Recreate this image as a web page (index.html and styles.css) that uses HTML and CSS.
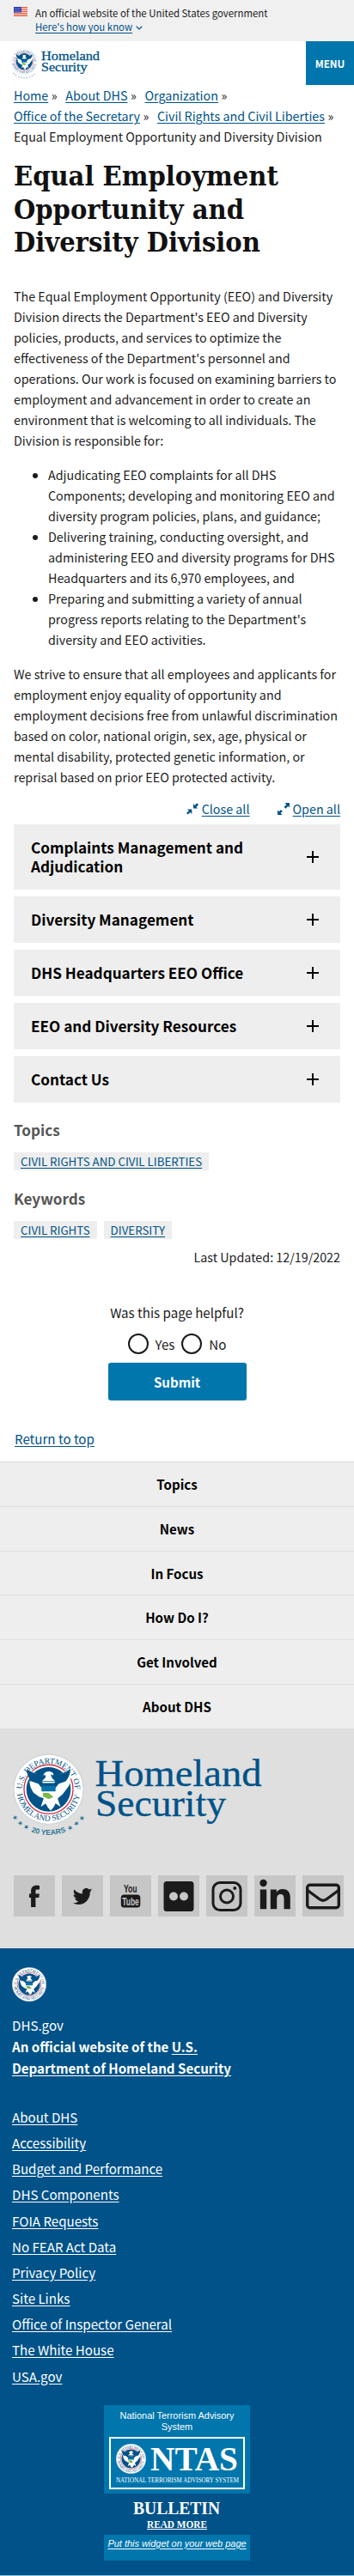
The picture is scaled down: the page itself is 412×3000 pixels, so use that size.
FILE: index.html
```html
<!DOCTYPE html>
<html lang="en">
<head>
<meta charset="utf-8">
<title>Equal Employment Opportunity and Diversity Division | Homeland Security</title>
<link rel="stylesheet" href="styles.css">
</head>
<body>
<svg class="defs" width="0" height="0" aria-hidden="true">
  <defs>
    <path id="ring-top" d="M12.500 51a37.500 37.500 0 0 1 75 0"/>
    <path id="ring-bottom" d="M4.900 54a45.300 45.300 0 0 0 90.200 0"/>
    <path id="ring-years" d="M-2 89a65 65 0 0 0 104 0"/>
    <symbol id="eagle" viewBox="0 0 100 100">
      <circle cx="50" cy="50" r="34.800" fill="#fff" stroke="#c8324a" stroke-width="1.600"/>
      <circle cx="50" cy="50" r="31.500" fill="#005288"/>
      <path fill="#fff" d="M17 19l17 10 2 4h28l2-4 17-10-1 14-3 12-9 12-7 6 4 12-7-5-3 6-4 4-4-4-3-6-7 5 4-12-7-6-9-12-3-12z"/>
      <path fill="#005288" d="M19 21c5 4 11 6 16 8l4 8 3 4h16l3-4 4-8c5-2 11-4 16-8 0 8-3 13-7 18l-9 3-6 7-4 2H45l-4-2-6-7-9-3c-4-5-7-10-7-18z"/>
      <path fill="#005288" d="M34 28c4-7 10-9 16-9s12 2 16 9l-4 11H38z"/>
      <path fill="#fff" d="M43 29c1-4 8-6 12-3 2 1 2 3 2 4l-4-1 2 5 4 4H41l5-5-1-4-2 2z"/>
      <path fill="#fff" d="M23 38l13 5 6 8v11l-5-1-8-6c-3-4-6-10-6-17zM77 38l-13 5-6 8v11l5-1 8-6c3-4 6-10 6-17z"/>
      <path fill="#0873a8" d="M40 45h20v8H40z"/>
      <path fill="#79b84a" d="M42 55h8l7 6-7 3-8-4z"/>
      <path fill="#fff" d="M44 64h12l-2 7-4 3-4-3z"/>
    </symbol>
    <symbol id="seal" viewBox="0 0 100 100">
      <circle cx="50" cy="50" r="49.500" fill="#fff" stroke="#b9c6ce" stroke-width="1"/>
      <text class="seal-text"><textPath href="#ring-top" startOffset="1" textLength="116">U.S. DEPARTMENT OF</textPath></text>
      <text class="seal-text"><textPath href="#ring-bottom" startOffset="3" textLength="126">HOMELAND SECURITY</textPath></text>
      <use href="#eagle" width="100" height="100"/>
    </symbol>
  </defs>
</svg>

<div class="banner">
  <svg class="flag" viewBox="0 0 16 11"><path fill="#fff" d="M0 0h16v11H0z"/><path stroke="#db3e1f" stroke-width=".9" d="M0 .5h16M0 2.200h16M0 3.900h16M0 5.600h16M0 7.300h16M0 9h16M0 10.600h16"/><path fill="#1e33b1" d="M0 0h9v6.500H0z"/><path stroke="#fff" stroke-width=".6" stroke-dasharray=".7 1" d="M.8 1.300h8M1.500 2.700h7M.8 4.100h8M1.500 5.400h7"/></svg>
  <div class="banner-text">
    <div>An official website of the United States government</div>
    <div><a href="#">Here's how you know</a><svg class="chev" viewBox="0 0 8 5"><path fill="none" stroke="#005288" stroke-width="1.200" d="M.8.8L4 3.900 7.200.8"/></svg></div>
  </div>
</div>

<header class="site-header">
  <svg class="logo" viewBox="0 0 120 50">
    <svg x="13" y="8.500" width="30.500" height="30.500"><use href="#seal"/></svg>
    <path d="M15.500 37a17.500 17.500 0 0 0 26 0" fill="none" stroke="#8fb0c4" stroke-width="1.200" stroke-dasharray="1.500 1.800"/>
    <text class="wordmark" x="48" y="21.500" font-size="15.500" textLength="68" lengthAdjust="spacingAndGlyphs">Homeland</text>
    <text class="wordmark" x="48" y="34.500" font-size="15.500" textLength="53.500" lengthAdjust="spacingAndGlyphs">Security</text>
  </svg>
  <button class="menu">MENU</button>
</header>

<nav class="crumbs">
  <div><a href="#">Home</a><i>»</i><a href="#">About DHS</a><i>»</i><a href="#">Organization</a><i>»</i></div>
  <div><a href="#">Office of the Secretary</a><i>»</i><a href="#">Civil Rights and Civil Liberties</a><i>»</i></div>
  <div>Equal Employment Opportunity and Diversity Division</div>
</nav>

<main>
  <h1>Equal Employment<br>Opportunity and<br>Diversity Division</h1>
  <p>The Equal Employment Opportunity (EEO) and Diversity<br>Division directs the Department's EEO and Diversity<br>policies, products, and services to optimize the<br>effectiveness of the Department's personnel and<br>operations. Our work is focused on examining barriers to<br>employment and advancement in order to create an<br>environment that is welcoming to all individuals. The<br>Division is responsible for:</p>
  <ul class="duties">
    <li>Adjudicating EEO complaints for all DHS<br>Components; developing and monitoring EEO and<br>diversity program policies, plans, and guidance;</li>
    <li>Delivering training, conducting oversight, and<br>administering EEO and diversity programs for DHS<br>Headquarters and its 6,970 employees, and</li>
    <li>Preparing and submitting a variety of annual<br>progress reports relating to the Department's<br>diversity and EEO activities.</li>
  </ul>
  <p>We strive to ensure that all employees and applicants for<br>employment enjoy equality of opportunity and<br>employment decisions free from unlawful discrimination<br>based on color, national origin, sex, age, physical or<br>mental disability, protected genetic information, or<br>reprisal based on prior EEO protected activity.</p>

  <div class="toggle-all">
    <a href="#"><svg viewBox="0 0 14 14"><path fill="#005288" d="M8 1v5.500h5.200L11.400 4.900 14 2 12.300.3 9.700 3zM6.300 13V7.600H1l1.800 1.600L0 11.900l1.600 1.700 2.800-2.700z"/></svg><span>Close all</span></a>
    <a href="#"><svg viewBox="0 0 14 14"><path fill="#005288" d="M8.500 0H14v5.500l-1.700-1.700L9.500 6.700 7.600 4.800l2.800-2.900zM5.500 14H0V8.500l1.700 1.700 2.200-2.300 1.900 1.900-2.200 2.300z"/></svg><span>Open all</span></a>
  </div>

  <div class="accordion">
    <h4 class="tall"><span>Complaints Management and<br>Adjudication</span><b></b></h4>
    <h4><span>Diversity Management</span><b></b></h4>
    <h4><span>DHS Headquarters EEO Office</span><b></b></h4>
    <h4><span>EEO and Diversity Resources</span><b></b></h4>
    <h4><span>Contact Us</span><b></b></h4>
  </div>

  <section class="tags">
    <h3>Topics</h3>
    <div class="tag-row"><a href="#" class="tag">CIVIL RIGHTS AND CIVIL LIBERTIES</a></div>
  </section>
  <section class="tags">
    <h3>Keywords</h3>
    <div class="tag-row"><a href="#" class="tag">CIVIL RIGHTS</a><a href="#" class="tag">DIVERSITY</a></div>
  </section>
  <div class="updated">Last Updated: 12/19/2022</div>

  <form class="helpful">
    <div>Was this page helpful?</div>
    <div class="radios"><span class="radio"></span><label>Yes</label><span class="radio"></span><label>No</label></div>
    <button type="button" class="submit">Submit</button>
  </form>
  <div class="to-top"><a href="#">Return to top</a></div>
</main>

<nav class="footer-nav">
  <a>Topics</a><a>News</a><a>In Focus</a><a>How Do I?</a><a>Get Involved</a><a>About DHS</a>
</nav>

<section class="brand">
  <svg class="brand-logo" viewBox="0 0 320 110">
    <svg x="15.500" y="7.800" width="82" height="100.040" viewBox="0 0 100 122" overflow="visible">
      <use href="#seal" width="100" height="100"/>
      <text class="years" font-size="10.500"><textPath href="#ring-years" startOffset="50%" text-anchor="middle">20 YEARS</textPath></text>
      <text class="years" font-size="8"><textPath href="#ring-years" startOffset="1" textLength="29">★★★</textPath></text>
      <text class="years" font-size="8"><textPath href="#ring-years" startOffset="90" textLength="29">★★★</textPath></text>
    </svg>
    <text class="wordmark" x="110.500" y="44.500" font-size="44" textLength="194" lengthAdjust="spacingAndGlyphs">Homeland</text>
    <text class="wordmark" x="111" y="80" font-size="44" textLength="152" lengthAdjust="spacingAndGlyphs">Security</text>
  </svg>
  <div class="social">
    <a href="#"><svg viewBox="0 0 48 48"><path d="M30 12v4.600h-2.600c-1.600 0-2 .8-2 2v3h4.500l-.6 4.500h-3.900V37h-5.300V26.100H18v-4.500h2.100v-3.500c0-4 2.500-6.300 6.200-6.300 1.600 0 3.100.1 3.700.2z"/></svg></a>
    <a href="#"><svg viewBox="0 0 48 48"><path d="M35 17.300l-2.300 2.300c.5 8.500-6.300 14.500-13 14.500-2.500 0-4.900-.7-6.900-2 2.400.3 4.800-.4 6.700-1.900-2-.1-3.700-1.400-4.300-3.200.7.1 1.400.1 2.100-.1-2.200-.5-3.800-2.400-3.700-4.700.7.400 1.400.6 2.200.6-2.100-1.500-2.700-4.200-1.400-6.300 2.400 2.900 5.800 4.800 9.600 5-1-4.300 1.500-6.500 4.500-6.500 1.400 0 2.600.6 3.400 1.500l3-1.100-1.700 2.400z"/></svg></a>
    <a href="#"><svg viewBox="0 0 48 48"><rect x="12.800" y="22.500" width="22.500" height="15" rx="3.500"/><text class="you" x="16" y="20.300" font-size="13.500" textLength="15.500" lengthAdjust="spacingAndGlyphs">You</text><text class="tube" x="14.300" y="35" font-size="13.500" textLength="19.500" lengthAdjust="spacingAndGlyphs">Tube</text></svg></a>
    <a href="#"><svg viewBox="0 0 48 48"><path fill-rule="evenodd" d="M10 7h28a3.500 3.500 0 0 1 3.500 3.500v28A3.500 3.500 0 0 1 38 42H10a3.500 3.500 0 0 1-3.500-3.500v-28A3.500 3.500 0 0 1 10 7zm8 12.500a5 5 0 1 0 0 10 5 5 0 0 0 0-10zm12 0a5 5 0 1 0 0 10 5 5 0 0 0 0-10z"/></svg></a>
    <a href="#"><svg viewBox="0 0 48 48"><g fill="none" stroke="#1b1b1b" stroke-width="3"><rect x="8" y="8.500" width="32" height="32" rx="8"/><circle cx="24" cy="24.500" r="7.500"/></g><circle cx="33.300" cy="15" r="2"/></svg></a>
    <a href="#"><svg viewBox="0 0 48 48"><circle cx="10.500" cy="9" r="4.200"/><path d="M6.800 16.500h7.400v22.800H6.800zM18.800 16.500h7v3.200c1.300-2.300 3.800-3.800 7-3.800 7 0 9 4.200 9 10.500v12.900h-7.300V27.700c0-3.300-.6-5.800-4-5.800-3.300 0-4.300 2.300-4.300 5.700v11.700h-7.400z"/></svg></a>
    <a href="#"><svg viewBox="0 0 48 48"><g fill="none" stroke="#1b1b1b" stroke-width="3.400"><rect x="5.700" y="11.200" width="36.600" height="26.600" rx="3"/><path d="M6 17.500l13.500 10c3.200 2.400 5.800 2.400 9 0l13.500-10"/></g></svg></a>
  </div>
</section>

<footer class="footer">
  <svg class="footer-seal" viewBox="0 0 100 100"><use href="#seal"/></svg>
  <div class="agency">
    <div>DHS.gov</div>
    <strong>An official website of the <a href="#">U.S.<br>Department of Homeland Security</a></strong>
  </div>
  <ul class="links">
    <li><a href="#">About DHS</a></li><li><a href="#">Accessibility</a></li><li><a href="#">Budget and Performance</a></li><li><a href="#">DHS Components</a></li><li><a href="#">FOIA Requests</a></li><li><a href="#">No FEAR Act Data</a></li><li><a href="#">Privacy Policy</a></li><li><a href="#">Site Links</a></li><li><a href="#">Office of Inspector General</a></li><li><a href="#">The White House</a></li><li><a href="#">USA.gov</a></li>
  </ul>
  <div class="ntas">
    <div class="ntas-top">
      <div>National Terrorism Advisory<br>System</div>
      <svg viewBox="0 0 158 61"><rect x="1" y="1" width="156" height="59" fill="none" stroke="#fff" stroke-width="2"/>
        <svg x="8" y="8" width="35" height="35"><use href="#seal"/></svg>
        <text x="48" y="38.700" font-size="40.500" font-weight="bold" textLength="102" lengthAdjust="spacingAndGlyphs">NTAS</text>
        <text x="8" y="52.700" font-size="8" textLength="143" lengthAdjust="spacingAndGlyphs">NATIONAL TERRORISM ADVISORY SYSTEM</text>
      </svg>
    </div>
    <svg class="bulletin" viewBox="0 0 170 48">
      <text x="34" y="24" font-size="21" font-weight="bold" textLength="101" lengthAdjust="spacingAndGlyphs">BULLETIN</text>
      <text x="50" y="39.500" font-size="13" font-weight="bold" textLength="70" lengthAdjust="spacingAndGlyphs">READ MORE</text>
      <path stroke="#fff" d="M50 41.500h70"/>
    </svg>
    <div class="ntas-bottom"><a href="#">Put this widget on your web page</a></div>
  </div>
</footer>
</body>
</html>
```
FILE: styles.css
```css
* { box-sizing: border-box; }
body { margin: 0; background: #fff; color: #1b1b1b; font: 14.300px/24px "Noto Sans CJK SC", "Noto Sans", sans-serif; white-space: nowrap; overflow-x: hidden; }
.defs { position: absolute; }
svg { display: block; flex: none; }
a { color: #005288; text-decoration: underline; text-underline-offset: 2px; }
h1, h3, h4, p, ul { margin: 0; padding: 0; }
button { border: 0; font-family: inherit; color: #fff; background: #0076ad; padding: 0; }
.seal-text { font: 11.500px "Liberation Serif", serif; fill: #005288; }
.years { font-family: "Liberation Sans", sans-serif; font-weight: bold; fill: #2e7896; }
.wordmark { font-family: "Liberation Serif", serif; fill: #005288; stroke: #005288; stroke-width: .3; }

.banner { display: flex; gap: 9px; height: 48px; background: #f0f0f0; padding: 7px 16px; }
.flag { width: 16px; height: 11px; margin-top: 1px; }
.banner-text { font-size: 11.420px; line-height: 16.300px; }
.banner-text div { display: flex; align-items: center; gap: 4px; }
.chev { width: 8px; height: 5px; margin-top: 2px; }

.site-header { display: flex; justify-content: space-between; height: 51px; }
.logo { width: 120px; height: 50px; }
.menu { width: 56px; height: 51px; font-size: 11.700px; font-weight: bold; }

.crumbs { padding: 0 16px; }
.crumbs i { display: inline-block; width: 20px; padding-left: 3.500px; font-style: normal; }

main { padding: 0 16px; }
h1 { margin: 15px 0 31px; height: 116px; font: bold 32.300px/38.700px "DejaVu Serif Condensed", "DejaVu Serif", serif; color: #111; }
.duties { margin: 16px 0; padding-left: 40px; }

.toggle-all { display: flex; justify-content: flex-end; gap: 32px; margin-top: 13px; height: 30px; }
.toggle-all a { display: flex; gap: 4px; text-decoration: none; }
.toggle-all span { text-decoration: underline; }
.toggle-all svg { width: 14px; height: 14px; margin-top: 5px; }

.accordion { display: grid; gap: 8px; }
.accordion h4 { display: flex; align-items: center; justify-content: space-between; height: 54px; padding: 0 25px 0 20px; background: #eee; color: #000; font-size: 17.150px; line-height: 22px; }
.accordion .tall { height: 76px; }
.accordion b { width: 14px; height: 14px; background: linear-gradient(#000, #000) center / 14px 2px no-repeat, linear-gradient(#000, #000) center / 2px 14px no-repeat; }

.tags { height: 80px; padding-top: 20px; }
.tags h3 { font-size: 17.100px; line-height: 24px; color: #555; margin-bottom: 14px; }
.tag-row { display: flex; gap: 8px; }
.tag { height: 21px; padding: 0 8px; background: #eee; font-size: 13.300px; line-height: 21px; }
.updated { text-align: right; margin-top: 8px; }

.helpful { display: flex; flex-direction: column; align-items: center; margin-top: 40px; font-size: 15.100px; }
.radios { display: flex; align-items: center; height: 24px; margin-top: 13px; }
.radio { width: 24px; height: 24px; border: 2px solid #1b1b1b; border-radius: 50%; margin-right: 8px; }
.radios label + .radio { margin-left: 8px; }
.submit { width: 161px; height: 44px; margin-top: 10px; border-radius: 3px; font-size: 15.100px; font-weight: bold; }
.to-top { margin: 32px 0 0 1px; height: 39px; font-size: 15.100px; }

.footer-nav { background: #eee; font-size: 15.100px; }
.footer-nav a { display: block; height: 51.800px; border-top: 1px solid #dfdfdf; text-align: center; font-weight: bold; color: #000; text-decoration: none; line-height: 50px; }

.brand { height: 256.200px; padding-top: 22px; background: #dfdfdf; }
.brand-logo { width: 320px; height: 110px; }
.social { display: flex; gap: 8px; padding: 39px 0 0 16px; }
.social a { background: #c6c6c6; }
.social svg { width: 48px; height: 48px; fill: #1b1b1b; }
.social .you, .social .tube { font-family: "Liberation Sans Narrow", "Liberation Sans", sans-serif; font-weight: bold; }
.social .tube { fill: #c6c6c6; }

.footer { height: 731px; padding: 22px 14px 0; background: #005288; color: #fff; font-size: 15.120px; border-bottom: 1px solid #8cc4e8; }
.footer a { color: #fff; }
.footer-seal { width: 40px; height: 40px; }
.agency { margin-top: 15px; line-height: 25px; }
.links { list-style: none; margin-top: 29px; line-height: 30.150px; }
.ntas { width: 170px; margin: 19px auto 0 107px; color: #fff; font: 10.950px/13px "Liberation Sans", sans-serif; text-align: center; }
.ntas svg { font-family: "Liberation Serif", serif; fill: #fff; }
.ntas-top { height: 103px; padding-top: 6px; background: #0076ad; }
.ntas-top > svg { width: 158px; height: 61px; margin: 5px auto 0; }
.bulletin { width: 170px; height: 48px; }
.ntas-bottom { height: 30px; padding-top: 4px; background: #0076ad; font-style: italic; }
```
